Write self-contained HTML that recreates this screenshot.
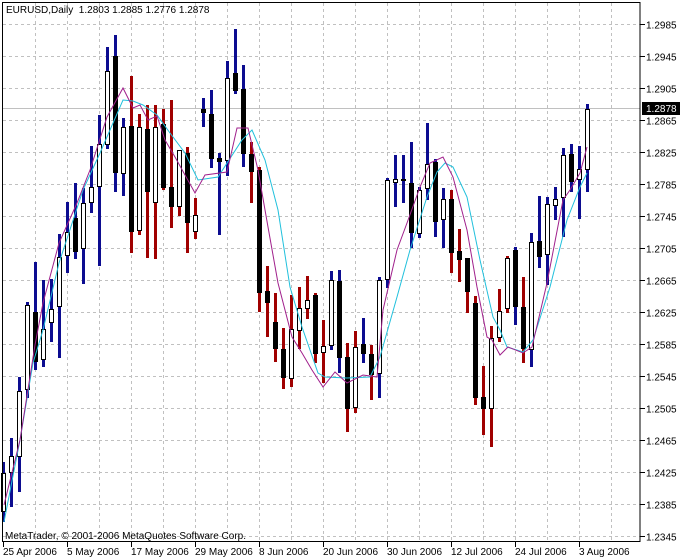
<!DOCTYPE html>
<html><head><meta charset="utf-8"><style>
html,body{margin:0;padding:0;background:#fff;width:680px;height:560px;overflow:hidden}
svg{display:block}
text{font-family:"Liberation Sans",sans-serif;font-size:10px;fill:#000}
</style></head><body>
<svg id="s" width="680" height="560" xmlns="http://www.w3.org/2000/svg">
<rect width="680" height="560" fill="#fff"/>
<g id="grid" stroke="#c0c0c0" stroke-width="1" stroke-dasharray="3,3"></g>
<line x1="3" y1="108.5" x2="640" y2="108.5" stroke="#c0c0c0"/>
<g id="c"></g>
<polyline fill="none" stroke="#20c0dc" stroke-width="1" points="4,522 20,440 33,363 43,330 59,263 83,190 100,153 110,130 123,100 133,101 143,105 157,115 170,133 185,153 198,180 218,177 242,140 252,130 265,160 278,210 290,287 302,327 318,373 325,377 347,378 370,377 380,357 397,297 410,250 427,197 437,172 445,163 453,167 467,197 480,260 493,317 500,330 507,347 523,352 533,340 550,287 567,220 580,187 587,173"/>
<polyline fill="none" stroke="#a0208c" stroke-width="1" points="4,505 20,440 35,345 43,303 59,243 77,203 90,170 107,117 123,88 133,108 140,105 148,120 157,116 165,140 175,157 195,193 205,175 227,172 237,128 248,128 258,170 268,227 278,283 292,337 302,353 312,370 323,387 335,372 347,383 363,375 377,377 383,310 397,250 407,223 420,187 430,163 443,157 453,177 467,230 477,287 487,337 492,340 500,355 508,347 523,353 532,347 547,283 563,200 570,190 580,173 587,147"/>
<rect x="2.5" y="2.5" width="637.5" height="539" fill="none" stroke="#000"/>
<g id="ax"></g>
<rect x="642" y="102" width="38" height="13" fill="#000"/>
<text x="646" y="112" style="fill:#fff">1.2878</text>
<text x="6" y="13">EURUSD,Daily&#160;&#160;1.2803 1.2885 1.2776 1.2878</text>
<text x="5" y="539">MetaTrader, © 2001-2006 MetaQuotes Software Corp.</text>
</svg>
<script>
var NS="http://www.w3.org/2000/svg";
function el(p,t,a,txt){var e=document.createElementNS(NS,t);for(var k in a)e.setAttribute(k,a[k]);if(txt)e.textContent=txt;p.appendChild(e);return e;}
var g=document.getElementById('grid'),ax=document.getElementById('ax'),c=document.getElementById('c');
for(var k=0;k<=16;k++){var y=24+32*k+0.5;el(g,'line',{x1:3,y1:y,x2:640,y2:y});
el(ax,'line',{x1:640,y1:y,x2:645,y2:y,stroke:'#000'});
if(k!=3||true)el(ax,'text',{x:646,y:y+4},(1.2985-0.004*k).toFixed(4));}
for(var k=0;k<19;k++){var x=35+32*k+0.5;el(g,'line',{x1:x,y1:3,x2:x,y2:541});}
var d=[[3,'25 Apr 2006'],[67,'5 May 2006'],[131,'17 May 2006'],[195,'29 May 2006'],[259,'8 Jun 2006'],[323,'20 Jun 2006'],[387,'30 Jun 2006'],[451,'12 Jul 2006'],[515,'24 Jul 2006'],[579,'3 Aug 2006']];
d.forEach(function(q){el(ax,'line',{x1:q[0]+0.5,y1:541,x2:q[0]+0.5,y2:547,stroke:'#000'});el(ax,'text',{x:q[0],y:555},q[1]);});
// [bodyTop, bodyBot, high, low, bull, wick]
var D=[
[473,512,462,522,1,'b'],[456,473,438,507,1,'b'],[391,457,377,492,1,'b'],[305,390,302,398,1,'b'],[312,362,262,370,0,'b'],
[329,360,280,367,1,'b'],[309,323,279,342,1,'b'],[257,307,234,358,1,'b'],[232,256,202,273,1,'b'],[218,252,183,259,0,'b'],
[203,249,188,284,1,'b'],[187,203,146,213,1,'b'],[144,187,115,266,1,'b'],[71,145,47,149,1,'b'],[56,173,35,192,0,'b'],
[127,174,118,196,1,'b'],[126,232,76,253,0,'r'],[127,231,114,235,1,'r'],[129,192,105,258,0,'r'],[127,203,105,259,1,'r'],
[124,188,109,190,0,'r'],[187,207,100,228,0,'r'],[150,207,150,216,1,'r'],[153,223,147,253,0,'r'],[215,232,198,239,1,'r'],
[109,113,98,127,0,'b'],[114,159,90,168,0,'b'],[158,162,153,235,0,'b'],[78,161,61,176,1,'b'],[73,91,29,94,0,'b'],
[89,154,65,167,0,'b'],[154,172,142,203,0,'r'],[170,293,167,312,0,'r'],[291,303,266,337,0,'r'],[322,349,293,362,0,'r'],
[349,378,328,389,0,'r'],[329,379,295,387,1,'r'],[308,331,287,349,1,'r'],[300,309,276,319,1,'r'],[295,354,293,363,0,'r'],
[346,353,320,383,1,'r'],[280,346,271,350,1,'b'],[281,358,270,373,0,'b'],[357,409,343,432,0,'r'],[347,408,331,413,1,'r'],
[344,354,318,363,0,'b'],[354,375,345,400,0,'r'],[280,374,277,398,1,'b'],[180,280,178,288,1,'b'],[179,183,155,207,1,'b'],
[179,181,155,203,0,'b'],[183,233,142,248,0,'b'],[190,234,187,238,1,'b'],[164,189,123,200,1,'b'],[162,222,159,237,0,'b'],
[199,220,188,248,1,'b'],[199,253,190,273,0,'r'],[251,260,229,282,0,'r'],[258,292,258,313,0,'r'],[303,398,296,405,0,'r'],
[397,409,366,435,0,'r'],[338,409,326,447,1,'r'],[311,338,289,342,1,'r'],[258,309,256,313,1,'r'],[250,307,247,325,0,'b'],
[307,349,277,363,0,'r'],[242,350,233,367,1,'b'],[241,257,196,268,0,'b'],[204,255,197,285,1,'b'],[199,206,187,220,1,'b'],
[155,198,148,237,1,'b'],[154,182,144,192,0,'b'],[169,180,146,219,1,'b'],[109,170,104,192,1,'b']];
D.forEach(function(r,i){var wx=2+8*i;
el(c,'rect',{x:wx,y:r[2],width:3,height:r[3]-r[2],fill:r[5]=='b'?'#0c0c90':'#a00000'});
var bx=1+8*i;
if(r[4])el(c,'rect',{x:bx+0.5,y:r[0]+0.5,width:4,height:Math.max(1,r[1]-r[0]-1),fill:'#fff',stroke:'#000'});
else el(c,'rect',{x:bx,y:r[0],width:5,height:Math.max(2,r[1]-r[0]),fill:'#000'});
});
</script>
</body></html>
